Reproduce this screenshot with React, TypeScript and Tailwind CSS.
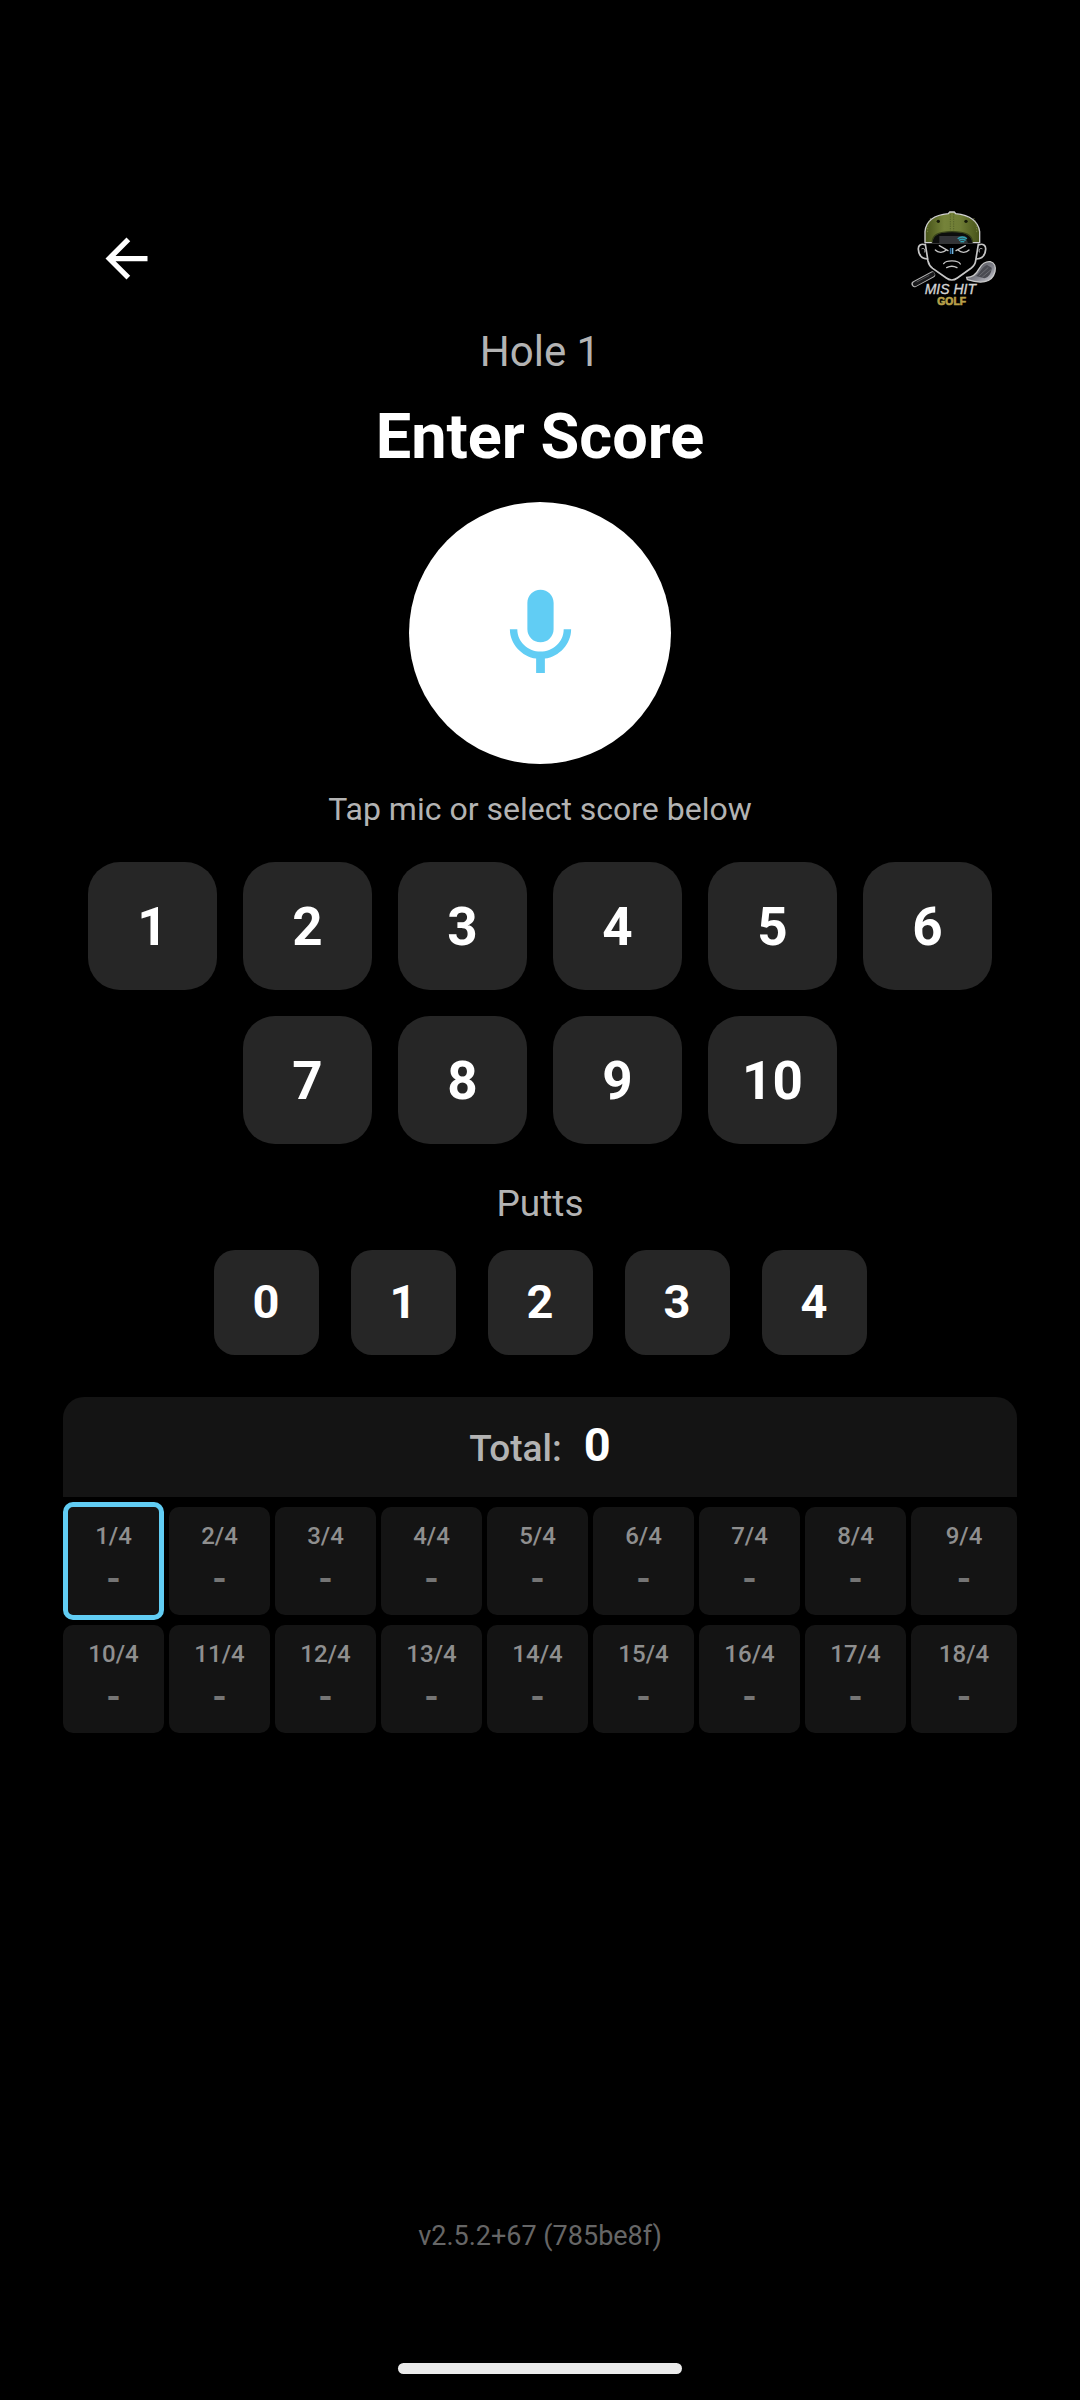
import { useState } from "react";
import clsx from "clsx";

const SCORES = [1, 2, 3, 4, 5, 6, 7, 8, 9, 10];
const PUTTS = [0, 1, 2, 3, 4];
const HOLES = Array.from({ length: 18 }, (_, i) => ({ number: i + 1, par: 4 }));

function BackIcon() {
  return (
    <svg viewBox="0 0 24 24" className="size-[63px]" fill="currentColor" aria-hidden="true">
      <path d="M20 11H7.83l5.59-5.59L12 4l-8 8 8 8 1.41-1.41L7.83 13H20v-2z" />
    </svg>
  );
}

function MicIcon() {
  return (
    <svg viewBox="0 0 24 24" className="size-[105px] text-[#61cdf4]" fill="currentColor" aria-hidden="true">
      <path d="M12 14c1.66 0 2.99-1.34 2.99-3L15 5c0-1.66-1.34-3-3-3S9 3.34 9 5v6c0 1.66 1.34 3 3 3zm5.3-3c0 3-2.54 5.1-5.3 5.1S6.7 14 6.7 11H5c0 3.41 2.72 6.23 6 6.72V21h2v-3.28c3.28-.48 6-3.3 6-6.72h-1.7z" />
    </svg>
  );
}

function Logo() {
  return (
    <svg viewBox="33 48 315 315" className="size-[105px]" role="img" aria-label="Mis Hit Golf">
      <defs>
        <linearGradient id="cap" x1="0" x2="1">
          <stop offset="0" stopColor="#465218" />
          <stop offset="0.35" stopColor="#75833a" />
          <stop offset="0.65" stopColor="#6e7c35" />
          <stop offset="1" stopColor="#465218" />
        </linearGradient>
        <linearGradient id="club" x1="0" x2="1" y2="1">
          <stop offset="0" stopColor="#3a3b40" />
          <stop offset="0.6" stopColor="#85868f" />
          <stop offset="1" stopColor="#d8d8de" />
        </linearGradient>
      </defs>

      {/* club */}
      <path d="M74 282L126 254" stroke="#b4b4b4" strokeWidth="19" strokeLinecap="round" />
      <path d="M75 282L128 253" stroke="#18181a" strokeWidth="13" strokeLinecap="round" />
      <path d="M80 276l38-20" stroke="#4d4d50" strokeWidth="3" />
      <path d="M230 262c18 0 28-8 36-24 8-15 22-25 35-23 13 3 17 16 14 30-4 16-14 27-31 30-19 4-36-1-52-6z" fill="url(#club)" stroke="#c9c9c9" strokeWidth="4" />
      <path d="M258 258c10-7 19-28 33-33l14 8c0 15-8 28-22 32z" fill="#4a4b52" />
      <path d="M268 257l27-25M277 261l26-22" stroke="#7c7d84" strokeWidth="2" />

      {/* face */}
      <path d="M106 160l8 56c2 9 6 14 14 21l42 27c10 7 22 7 32 0l43-29c7-5 11-10 13-20l8-55z" fill="#000" />
      <g fill="none" stroke="#c6c6c6" strokeWidth="5" strokeLinecap="round" strokeLinejoin="round">
        <path d="M105 164c-12-4-21 2-20 14 1 15 9 28 27 29" />
        <path d="M106 163l8 50c2 10 6 16 14 22l41 29c11 8 22 8 33 0l42-30c8-6 12-13 13-22l8-49" />
        <path d="M267 164c12-4 21 2 20 14-1 15-9 28-27 29" />
        <path d="M96 176c7-3 11 4 8 10M276 176c-7-3-11 4-8 10" strokeWidth="3" />
        <g strokeWidth="4">
          <path d="M148 167l26 15" />
          <path d="M136 180c8 9 24 9 32 1" />
          <path d="M226 167l-28 15" />
          <path d="M237 180c-8 9-24 9-32 1" />
          <path d="M161 221c8-11 43-11 50 1" />
          <path d="M170 233c9-5 22-5 31 0" />
        </g>
      </g>
      <path d="M182 174v18" stroke="#2f6fa3" strokeWidth="5" />
      <path d="M188 174v18" stroke="#79b9df" strokeWidth="4" />

      {/* cap */}
      <path d="M105 158V125c3-30 26-50 70-54l4-5h14l4 5c44 5 68 25 72 54v33z" fill="url(#cap)" stroke="#d0d0d0" strokeWidth="4" strokeLinejoin="round" />
      <path d="M126 159c2-24 19-34 60-34s60 10 62 34z" fill="#0d0e0d" />
      <path d="M126 157c2-23 19-32 60-32s60 9 62 32" fill="none" stroke="#37421a" strokeWidth="4" />
      <path d="M148 138h78l8 22h-86z" fill="#333437" />
      <path d="M181 72v50M191 72v50" stroke="#4a5624" strokeWidth="2" strokeDasharray="4 3" />
      <path d="M122 84c-7 12-10 27-9 44M251 84c7 12 10 27 9 44" fill="none" stroke="#8a984c" strokeWidth="2" strokeDasharray="4 4" />
      <circle cx="145" cy="94" r="5" fill="#161a08" />
      <circle cx="228" cy="94" r="5" fill="#161a08" />
      <g fill="none" stroke="#2fa4b5" strokeWidth="4">
        <path d="M203 146c8-6 19-6 28 0M207 151c6-4 14-4 20 0M211 156c4-2 8-2 12 0" />
      </g>

      <text x="181" y="313" textAnchor="middle" fontFamily="Liberation Sans, sans-serif" fontStyle="italic" fontSize="42" fill="#d4d4d4" stroke="#d4d4d4" strokeWidth="1">MIS HIT</text>
      <text x="185" y="345" textAnchor="middle" fontFamily="Liberation Sans, sans-serif" fontWeight="700" fontSize="31" fill="#b8a04a" stroke="#b8a04a" strokeWidth="2">GOLF</text>
    </svg>
  );
}

export default function App() {
  const [currentHole, setCurrentHole] = useState(1);
  const [scores, setScores] = useState<Record<number, number>>({});

  const total = Object.values(scores).reduce((sum, score) => sum + score, 0);

  const handleScore = (score: number) => {
    setScores({ ...scores, [currentHole]: score });
  };

  return (
    <main className="flex min-h-screen flex-col bg-black px-[63px] pt-[206px] pb-[26px] font-['Roboto',sans-serif] text-white">
      <header className="flex items-center justify-between px-[11px]">
        <button type="button" aria-label="Back" className="p-[21px]">
          <BackIcon />
        </button>
        <Logo />
      </header>

      <section className="flex flex-col items-center text-center">
        <p className="mt-[11px] text-[42px] leading-[60px] text-[#b3b3b3]">Hole {currentHole}</p>
        <h1 className="mt-[13px] text-[63px] leading-[84px] font-bold">Enter Score</h1>
        <button type="button" aria-label="Speak score" className="mt-[23px] flex size-[262px] items-center justify-center rounded-full bg-white">
          <MicIcon />
        </button>
        <p className="mt-[23px] text-[32px] leading-[44px] text-[#b3b3b3]">Tap mic or select score below</p>
      </section>

      <div className="mt-[31px] flex flex-wrap justify-center gap-[26px]">
        {SCORES.map((score) => (
          <button
            key={score}
            type="button"
            onClick={() => handleScore(score)}
            className="h-32 w-[129px] rounded-[32px] bg-[#262626] pt-1 text-[53px] font-bold"
          >
            {score}
          </button>
        ))}
      </div>

      <h2 className="mt-[34px] text-center text-[37px] leading-[52px] text-[#b3b3b3]">Putts</h2>
      <div className="mt-5 flex flex-wrap justify-center gap-8">
        {PUTTS.map((putt) => (
          <button key={putt} type="button" className="size-[105px] rounded-[21px] bg-[#262626] text-[47px] font-bold">
            {putt}
          </button>
        ))}
      </div>

      <section className="mt-[42px]">
        <div className="flex h-[100px] items-baseline justify-center gap-[22px] rounded-t-[21px] bg-[#141414] pt-4 leading-[64px]">
          <span className="text-[37px] font-medium text-[#b3b3b3]">Total:</span>
          <span className="text-[47px] font-bold">{total}</span>
        </div>
        <div className="mt-[5px] grid grid-cols-9">
          {HOLES.map(({ number, par }) => (
            <button
              key={number}
              type="button"
              onClick={() => setCurrentHole(number)}
              className={clsx(
                "flex flex-col items-center rounded-[10px] bg-[#141414] pt-[13px] pb-[18px]",
                number % 9 !== 0 && "mr-[5px]",
                number === currentHole ? "border-5 border-[#61cdf4]" : "my-[5px]"
              )}
            >
              <span className="text-[24px] leading-[32px] font-medium text-[#8f8f8f]">{number}/{par}</span>
              <span className="mt-[9px] text-[37px] leading-[36px] font-bold text-[#757575]">{scores[number] ?? "-"}</span>
            </button>
          ))}
        </div>
      </section>

      <footer className="mt-auto flex flex-col items-center pt-10">
        <p className="text-[27px] leading-[36px] text-[#666666]">v2.5.2+67 (785be8f)</p>
        <div className="mt-[109px] h-[11px] w-[284px] rounded-full bg-[#ebebeb]" />
      </footer>
    </main>
  );
}
